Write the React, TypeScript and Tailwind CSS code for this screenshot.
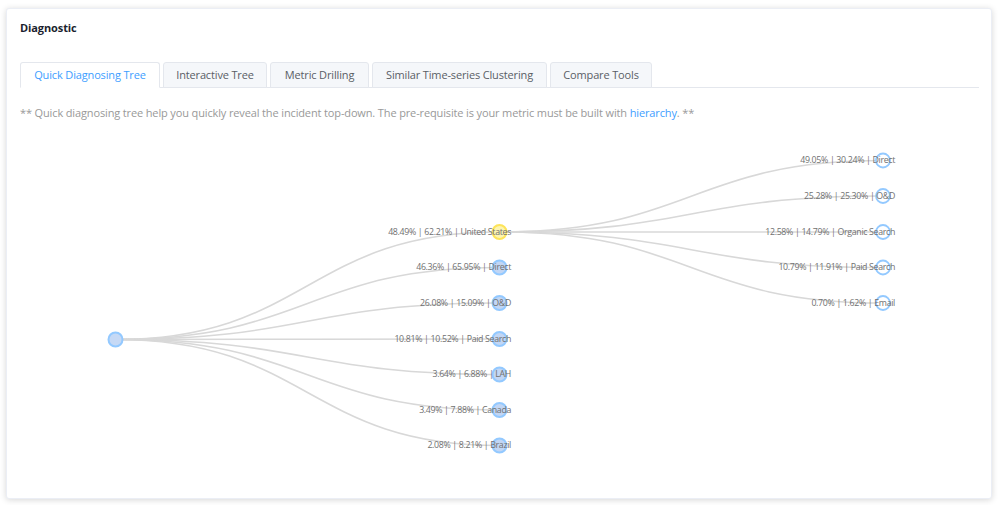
const FONT = '"Open Sans", "Noto Sans", sans-serif';

const tabs = [
  { label: "Quick Diagnosing Tree", w: "w-[140px]", active: true },
  { label: "Interactive Tree", w: "w-[104px]" },
  { label: "Metric Drilling", w: "w-[99px]" },
  { label: "Similar Time-series Clustering", w: "w-[175px]" },
  { label: "Compare Tools", w: "w-[102px]" },
];

const root = { x: 115.5, y: 339.5 };
const mid = [
  { y: 232, t: "48.49% | 62.21% | United States", hl: true },
  { y: 267.5, t: "46.36% | 65.95% | Direct" },
  { y: 303, t: "26.08% | 15.09% | O&D" },
  { y: 339, t: "10.81% | 10.52% | Paid Search" },
  { y: 374.5, t: "3.64% | 6.88% | LAH" },
  { y: 410, t: "3.49% | 7.88% | Canada" },
  { y: 445.5, t: "2.08% | 8.21% | Brazil" },
];
const leaves = [
  { y: 160.5, t: "49.05% | 30.24% | Direct" },
  { y: 196, t: "25.28% | 25.30% | O&D" },
  { y: 232, t: "12.58% | 14.79% | Organic Search" },
  { y: 267.5, t: "10.79% | 11.91% | Paid Search" },
  { y: 303, t: "0.70% | 1.62% | Email" },
];

const link = (x1: number, y1: number, x2: number, y2: number) => {
  const c = (x1 + x2) / 2;
  return `M${x1} ${y1}C${c} ${y1} ${c} ${y2} ${x2} ${y2}`;
};

function Tree() {
  const X1 = 499.5;
  const X2 = 883;
  return (
    <svg width="985" height="372" viewBox="0 121 985 372" className="block" style={{ fontFamily: FONT }}>
      <g transform="translate(-7 0)">
        <g fill="none" stroke="#d8d8d8" strokeWidth="1.6">
          {mid.map((m) => (
            <path key={m.t} d={link(root.x, root.y, X1, m.y)} />
          ))}
          {leaves.map((l) => (
            <path key={l.t} d={link(X1, 232, X2, l.y)} />
          ))}
        </g>
        <circle cx={root.x} cy={root.y} r="7" fill="#c6d9f5" stroke="#93c9ff" strokeWidth="2" />
        {mid.map((m) => (
          <g key={m.t}>
            <circle
              cx={X1}
              cy={m.y}
              r="7"
              fill={m.hl ? "#fdf5b0" : "#c2d6f4"}
              stroke={m.hl ? "#fde45a" : "#93c9ff"}
              strokeWidth="2"
            />
            <text x={511} y={m.y + 2.9} textAnchor="end" fontSize="8.8" letterSpacing="-0.33" fill="#707070">
              {m.t}
            </text>
          </g>
        ))}
        {leaves.map((l) => (
          <g key={l.t}>
            <circle cx={X2} cy={l.y} r="7" fill="#ffffff" stroke="#93c9ff" strokeWidth="1.8" />
            <text x={895} y={l.y + 2.9} textAnchor="end" fontSize="8.8" letterSpacing="-0.33" fill="#707070">
              {l.t}
            </text>
          </g>
        ))}
      </g>
    </svg>
  );
}

export default function App() {
  return (
    <div className="w-[998px] h-[505px] bg-white overflow-hidden pt-2 pl-[6px]" style={{ fontFamily: FONT }}>
      <div className="w-[986px] h-[491px] bg-white rounded-[3px] border border-[#ebeef5] shadow-[0_1px_6px_rgba(0,0,0,0.16)] overflow-hidden">
        <div className="pl-[13px] pt-3 h-[53px] text-[11px] leading-[14px] font-bold tracking-[-0.1px] text-[#1b1f2e]">Diagnostic</div>
        <div className="ml-[13px] w-[959px] h-[26px] flex gap-[3px] border-b border-[#e4e7ed]">
          {tabs.map((t) => (
            <div
              key={t.label}
              className={`${t.w} h-[26px] flex items-center justify-center text-[11px] tracking-[-0.15px] rounded-t-[3px] border border-[#e4e7ed] ${
                t.active ? "bg-white text-[#409eff] border-b-white" : "bg-[#f5f7fa] text-[#5a5e66] border-b-[#e4e7ed]"
              }`}
            >
              {t.label}
            </div>
          ))}
        </div>
        <div className="ml-[13px] mt-4 h-[17px] text-[11px] tracking-[-0.135px] leading-[17px] text-[#999999] whitespace-nowrap">
          ** Quick diagnosing tree help you quickly reveal the incident top-down. The pre-requisite is your metric must be built with{" "}
          <span className="text-[#409eff]">hierarchy</span>. **
        </div>
        <Tree />
      </div>
    </div>
  );
}
